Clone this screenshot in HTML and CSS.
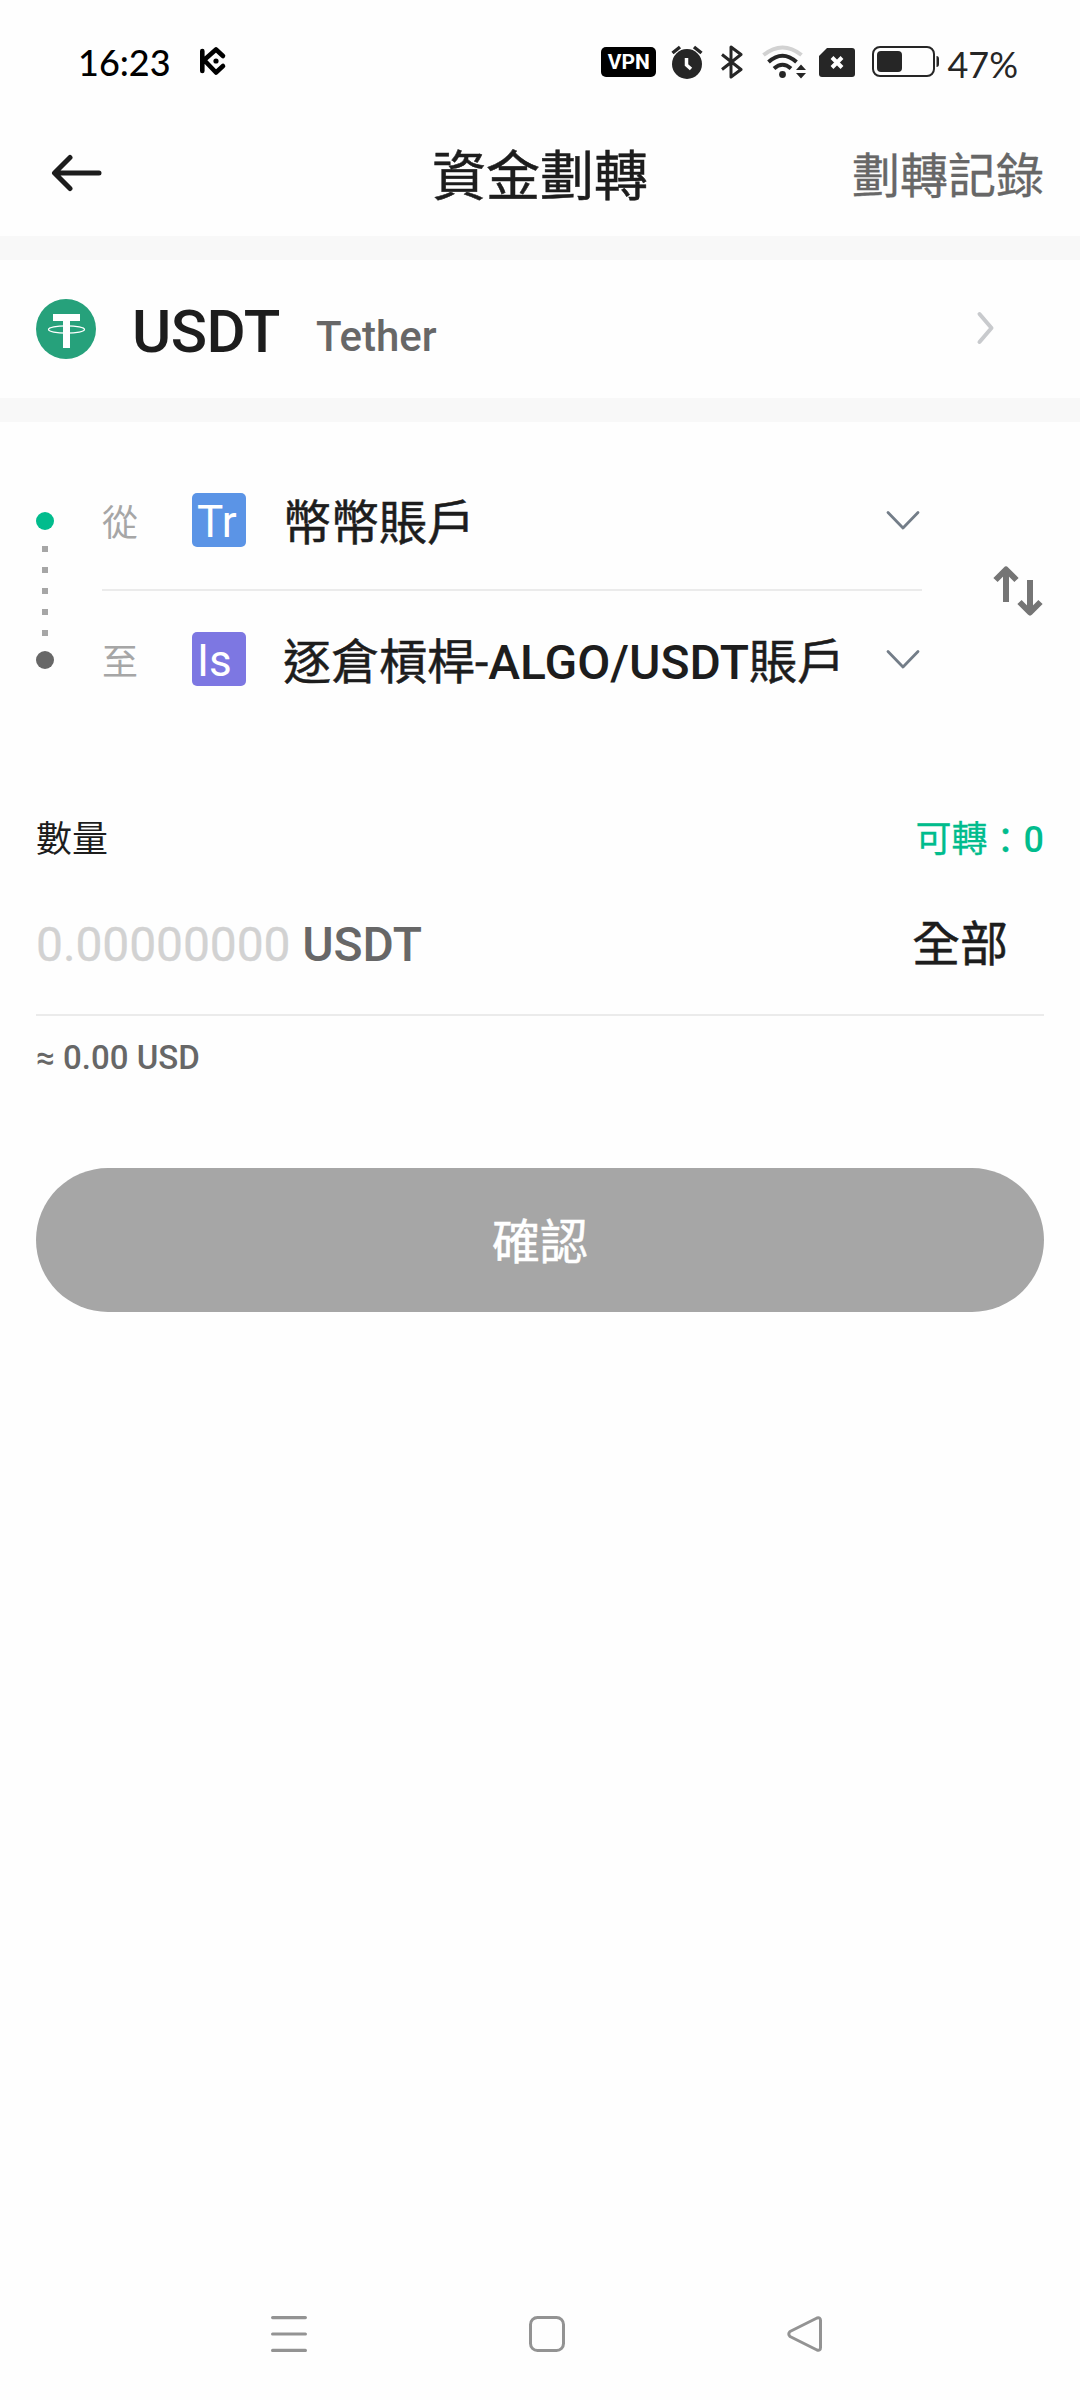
FILE: index.html
```html
<!DOCTYPE html>
<html lang="zh-Hant">
<head>
<meta charset="utf-8">
<title>資金劃轉</title>
<link rel="stylesheet" href="styles.css">
</head>
<body>
<div class="screen">
  <div class="status">
    <span class="clock">16:23</span>
    <svg class="kc" width="30" height="32" viewBox="0 0 30 32" fill="none" stroke="#000" stroke-width="4.6" stroke-linecap="round" stroke-linejoin="round"><path d="M4.3 5v20M5 15L18 3.500L25 10M7 15L18 26.500L25 20"/><circle cx="18" cy="15" r="2.600" fill="#000" stroke="none"/></svg>
    <div class="tray">
      <span class="vpn">VPN</span>
      <svg class="alarm" width="32" height="36" viewBox="0 0 32 36"><circle cx="16" cy="20" r="15" fill="#262626"/><path d="M1.500 9L9 3M30.500 9L23 3" stroke="#262626" stroke-width="3.500"/><path d="M15.500 14v7l4.500 4" stroke="#fff" stroke-width="3.500" fill="none"/></svg>
      <svg class="bt" width="22" height="36" viewBox="0 0 22 36" fill="none" stroke="#262626" stroke-width="3" stroke-linejoin="round"><path d="M1 10.500L20 25.500L10 33V3L20 10.500L1 25.500"/></svg>
      <svg class="wifi" width="46" height="36" viewBox="0 0 46 36" fill="none" stroke-width="4"><path d="M1.500 11Q20.500-4 39.500 11" stroke="#d2d2d2"/><path d="M6.500 18Q20.500 5.500 34.500 18M12 24.500Q20.500 17 29 24.500" stroke="#262626"/><circle cx="20.500" cy="30.500" r="3.400" fill="#262626"/><path d="M34 26L39 20.500L44 26zM34 29L39 34.500L44 29z" fill="#262626"/></svg>
      <svg class="sim" width="36" height="29" viewBox="0 0 36 29"><path d="M8 0H33Q36 0 36 3V26Q36 29 33 29H3Q0 29 0 26V8z" fill="#262626"/><path d="M13 9.500L23 19.500M23 9.500L13 19.500" stroke="#fff" stroke-width="4"/></svg>
      <svg class="battery" width="68" height="32" viewBox="0 0 68 32"><rect x="1" y="1" width="61" height="29" rx="7" fill="none" stroke="#262626" stroke-width="2"/><rect x="5" y="5" width="25" height="21" rx="4" fill="#262626"/><path d="M64.500 10Q67 10 67 13V18Q67 21 64.500 21z" fill="#262626"/></svg>
      <span class="percent">47%</span>
    </div>
  </div>

  <header class="header">
    <svg class="back" width="52" height="38" viewBox="0 0 52 38" fill="none" stroke="#1d1d1d" stroke-width="5" stroke-linecap="round" stroke-linejoin="round"><path d="M19 3.500L3.500 19L19 34.500M4 19H48"/></svg>
    <h1 class="title">資金劃轉</h1>
    <a class="history">劃轉記錄</a>
  </header>

  <div class="band"></div>

  <div class="coin">
    <svg class="coin-logo" width="60" height="60" viewBox="0 0 60 60"><circle cx="30" cy="30" r="30" fill="#26a17b"/><path d="M17 15H44V22H34V49H27V22H17z" fill="#fff"/><ellipse cx="30.500" cy="30.500" rx="18" ry="3.600" fill="none" stroke="#fff" stroke-width="1.300"/></svg>
    <span class="symbol">USDT</span>
    <span class="name">Tether</span>
    <svg class="go" width="20" height="36" viewBox="0 0 20 36" fill="none" stroke="#c8cacd" stroke-width="4" stroke-linecap="round" stroke-linejoin="round"><path d="M3.500 3L15.500 17L3.500 31"/></svg>
  </div>

  <div class="band"></div>

  <section class="transfer">
    <div class="track">
      <i class="dot from"></i>
      <div class="dashes"><i></i><i></i><i></i><i></i><i></i></div>
      <i class="dot to"></i>
    </div>
    <div class="accounts">
      <div class="account">
        <span class="label">從</span>
        <span class="badge blue">Tr</span>
        <span class="acct">幣幣賬戶</span>
        <svg class="down" width="36" height="22" viewBox="0 0 36 22" fill="none" stroke="#737d88" stroke-width="2.800" stroke-linecap="round" stroke-linejoin="round"><path d="M3 3.500L18 19L33 3.500"/></svg>
      </div>
      <div class="account">
        <span class="label">至</span>
        <span class="badge purple">Is</span>
        <span class="acct">逐倉槓桿-<span class="latin">ALGO/USDT</span>賬戶</span>
        <svg class="down" width="36" height="22" viewBox="0 0 36 22" fill="none" stroke="#737d88" stroke-width="2.800" stroke-linecap="round" stroke-linejoin="round"><path d="M3 3.500L18 19L33 3.500"/></svg>
      </div>
    </div>
    <svg class="swap" width="50" height="50" viewBox="0 0 50 50" fill="none" stroke="#757575" stroke-width="6" stroke-linejoin="round"><path d="M13 36V4M2.500 14L13 3.500L23.500 14M37 14V46M26.500 36L37 46.500L47.500 36"/></svg>
  </section>

  <section class="amount">
    <div class="amount-head"><span>數量</span><span class="avail">可轉<span class="colon">：</span><span class="latin">0</span></span></div>
    <div class="field"><span class="input"><span class="placeholder">0.00000000</span> USDT</span><span class="all">全部</span></div>
    <div class="approx">≈ 0.00 USD</div>
  </section>

  <button class="confirm">確認</button>

  <nav class="nav">
    <svg width="36" height="36" viewBox="0 0 36 36" fill="none" stroke="#939393" stroke-width="3.200" stroke-linecap="round"><path d="M1.600 1.600H34.400M1.600 18H34.400M1.600 34.400H34.400"/></svg>
    <svg width="36" height="36" viewBox="0 0 36 36" fill="none" stroke="#939393" stroke-width="3"><rect x="1.500" y="1.500" width="33" height="33" rx="7"/></svg>
    <svg width="36" height="36" viewBox="0 0 36 36" fill="none" stroke="#939393" stroke-width="3" stroke-linejoin="round"><path d="M3 15.500Q0.500 18 3 20.500L30 34Q33.500 35 33.500 31.500V4.500Q33.500 1 30 2z"/></svg>
  </nav>
</div>
</body>
</html>
```
FILE: styles.css
```css
* { box-sizing: border-box; }
body { margin: 0; background: #fefefe; color: #1d1d1d; font-family: Roboto, "Noto Sans CJK TC", sans-serif; }
svg { display: block; flex: none; }
.screen { width: 1080px; height: 2400px; display: flex; flex-direction: column; }
.latin { font-weight: 500; -webkit-text-stroke: 0; }
.title, .acct, .all, .confirm { -webkit-text-stroke: 0.5px currentColor; }
.history, .avail, .placeholder { -webkit-text-stroke: 0.3px currentColor; }

.status { height: 124px; padding: 0 62px 0 78px; display: flex; align-items: center; font-family: Lato, sans-serif; color: #000; }
.clock { font-size: 36px; line-height: 44px; width: 120px; font-weight: 500; }
.tray { margin-left: auto; display: flex; align-items: center; color: #262626; }
.vpn { width: 55px; height: 30px; border-radius: 5px; background: #000; color: #fff; font: 700 21px/31px Roboto, sans-serif; text-align: center; }
.alarm { margin-left: 15px; }
.bt { margin-left: 18px; }
.wifi { margin-left: 19px; }
.sim { margin-left: 11px; }
.battery { margin-left: 17px; }
.percent { margin-left: 7px; font-size: 36px; line-height: 44px; padding-top: 3px; }

.header { height: 112px; padding: 0 36px 12px; display: grid; grid-template-columns: 1fr auto 1fr; align-items: center; }
.back { margin: 0 0 3px 15px; }
.title { margin: 0; padding-top: 7px; font-size: 54px; line-height: 72px; font-weight: 400; }
.history { justify-self: end; padding-top: 5px; font-size: 48px; line-height: 64px; color: #676767; }

.band { height: 24px; background: #f8f8f8; }
.coin { height: 138px; padding: 0 84px 0 36px; display: flex; align-items: center; }
.symbol { margin-left: 36px; padding-top: 5px; font-size: 60px; line-height: 70px; font-weight: 500; letter-spacing: -0.5px; }
.name { margin-left: 36px; padding-top: 15px; font-size: 42px; line-height: 50px; font-weight: 500; color: #676767; }
.go { margin-left: auto; }

.transfer { height: 334px; padding: 0 36px; display: flex; align-items: center; }
.track { width: 18px; display: flex; flex-direction: column; align-items: center; justify-content: space-between; height: 157px; margin-top: 3px; }
.dot { width: 18px; height: 18px; border-radius: 50%; }
.dot.from { background: #01bc8d; }
.dot.to { background: #676767; }
.dashes { display: flex; flex-direction: column; gap: 15px; }
.dashes i { width: 6px; height: 6px; background: #a6a6a6; }
.accounts { width: 820px; margin-left: 48px; }
.account { height: 136px; display: flex; align-items: center; }
.account:first-child { height: 140px; border-bottom: 2px solid #ebebeb; }
.label { width: 90px; padding-top: 8px; font-size: 36px; line-height: 52px; color: #a6a6a6; }
.badge { width: 54px; height: 54px; border-radius: 5px; padding-left: 5px; color: #fff; font-size: 44px; line-height: 58px; }
.blue { background: #5b94e6; }
.purple { background: #7d77e2; }
.acct { margin-left: 37px; padding-top: 8px; font-size: 48px; line-height: 64px; white-space: nowrap; }
.down { margin: 0 1px 0 auto; }
.swap { margin: 3px 1px 0 auto; }

.amount { padding: 58px 36px 0; }
.amount-head { display: flex; justify-content: space-between; font-size: 36px; line-height: 52px; }
.avail { color: #01bc8d; }
.colon { position: relative; top: 2px; }
.field { margin-top: 47px; height: 103px; padding-right: 36px; border-bottom: 2px solid #ebebeb; display: flex; justify-content: space-between; font-size: 48px; line-height: 64px; }
.input { color: #676767; font-weight: 500; letter-spacing: -0.1px; }
.placeholder { color: #d2d2d2; font-weight: 400; }
.approx { margin-top: 21px; font-size: 33px; line-height: 42px; font-weight: 500; color: #676767; }

.confirm { margin: 89px 36px 0; height: 144px; padding: 5px 0 0; border: 0; border-radius: 72px; background: #a6a6a6; color: #fff; font: 400 48px/64px Roboto, "Noto Sans CJK TC", sans-serif; flex: none; }

.nav { margin-top: auto; padding: 0 257px 48px 271px; display: flex; justify-content: space-between; }
```
